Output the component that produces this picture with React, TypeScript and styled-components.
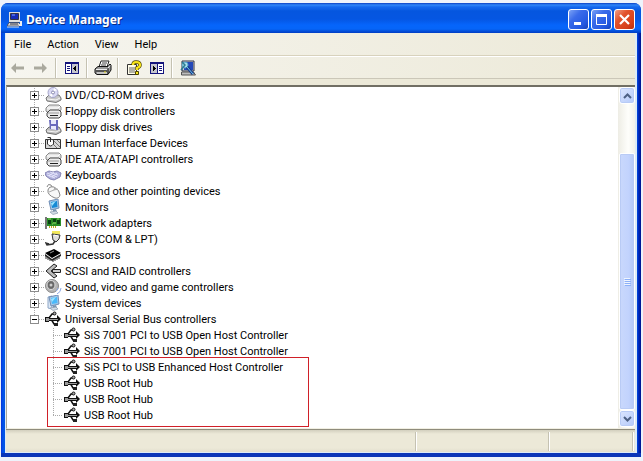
import React from "react";
import styled, { createGlobalStyle, css } from "styled-components";

const GlobalStyle = createGlobalStyle`
  * { box-sizing: border-box; }
  body {
    margin: 0;
    background: #eef3fb;
    color: #000;
    font: 11px/16px Tahoma, Roboto, "Liberation Sans", sans-serif;
    overflow: hidden;
  }
  button { font: inherit; color: inherit; margin: 0; padding: 0; border: 0; background: none; }
  ul { list-style: none; margin: 0; padding: 0; }
  svg { display: block; flex: none; }
`;

const Desktop = styled.div`
  display: flex;
  height: 100vh;
  padding: 3px 2px 4px 1px;
`;

const WindowFrame = styled.main`
  flex: 1;
  min-width: 0;
  display: flex;
  flex-direction: column;
  padding: 0 4px 4px;
  border-radius: 7px 7px 0 0;
  background: linear-gradient(90deg, #0831d9 0, #0055ea 2px, #0453e4 4px, #0453e4 calc(100% - 4px), #0030c8 calc(100% - 3px), #00138c 100%);
  box-shadow: inset 0 -4px 0 #0a35b8;
`;

const TitleBar = styled.header`
  display: flex;
  align-items: center;
  height: 30px;
  margin: 0 -4px;
  padding: 3px 6px 0;
  gap: 3px;
  border-radius: 7px 7px 0 0;
  background: linear-gradient(#0a3fc4 0, #2f86f8 2px, #1468ee 4px, #0556df 8px, #0556e2 16px, #0665fb 22px, #0665f8 26px, #0450da 28px, #003dc4 30px);
  color: #fff;
`;

const Title = styled.h1`
  flex: 1;
  margin: 0;
  font: bold 12px/20px "Trebuchet MS", "Noto Sans", sans-serif;
  text-shadow: 1px 1px #0a2a86;
`;

const CaptionButtons = styled.div`
  display: flex;
  gap: 2px;
`;

const CaptionButton = styled.button<{ $close?: boolean }>`
  width: 21px;
  height: 21px;
  display: grid;
  place-items: center;
  border: 1px solid #fff;
  border-radius: 3px;
  background: ${(p) =>
    p.$close
      ? "linear-gradient(135deg, #f0a088 0, #e2532c 35%, #d6401a 75%, #b83010 100%)"
      : "linear-gradient(135deg, #7ba2f5 0, #3a6bea 35%, #245ae2 75%, #1743b8 100%)"};
`;

const Client = styled.div`
  flex: 1;
  min-height: 0;
  display: flex;
  flex-direction: column;
  border: 0 solid #dcebf8;
  border-width: 0 2px 1px 1px;
  background: #ece9d8;
`;

const MenuBar = styled.nav`
  display: flex;
  height: 23px;
  background: linear-gradient(90deg, #f6f5ef, #ece9d8);
  border-bottom: 1px solid #d8d2bd;
`;

const MenuItem = styled.button`
  padding: 2px 8px 0;
`;

const ToolBar = styled.div`
  display: flex;
  align-items: center;
  height: 23px;
  border-top: 1px solid #fff;
  border-bottom: 1px solid #cbc7b8;
  background: linear-gradient(90deg, #f6f5ef, #ece9d8);
`;

const ToolButton = styled.button`
  width: 23px;
  height: 20px;
  display: grid;
  place-items: center;
`;

const ToolSeparator = styled.span`
  width: 2px;
  height: 20px;
  margin: 0 3px;
  border-left: 1px solid #c5c2b2;
  border-right: 1px solid #fff;
`;

const Pane = styled.section`
  flex: 1;
  min-height: 0;
  display: flex;
  margin-top: 6px;
  border: 1px solid #aca899;
  border-top: 2px solid #716f64;
  border-right: 0;
  border-bottom-color: #f1efe2;
  background: #fff;
`;

const TreeScroll = styled.div`
  flex: 1;
  min-width: 0;
  overflow: hidden;
`;

const dots = "repeating-linear-gradient(0deg, #a9a9a9 0 1px, transparent 1px 2px)";
const dotsAcross = "repeating-linear-gradient(90deg, #a9a9a9 0 1px, transparent 1px 2px)";

const Row = styled.div<{ $child?: boolean; $last?: boolean }>`
  display: flex;
  align-items: center;
  height: 16px;
  padding-left: ${(p) => (p.$child ? "57px" : "23px")};
  white-space: nowrap;
  ${(p) =>
    p.$child &&
    css`
      background:
        ${dots} 46px 0 / 1px ${p.$last ? "8px" : "16px"} no-repeat,
        ${dotsAcross} 46px 8px / 10px 1px no-repeat;
    `}
  ${(p) =>
    !p.$child &&
    css`
      background:
        ${dots} 27px 0 / 1px ${p.$last ? "8px" : "16px"} no-repeat,
        ${dotsAcross} 32px 8px / 6px 1px no-repeat;
    `}
`;

const Expander = styled.button`
  width: 9px;
  height: 9px;
  flex: none;
  margin-right: 6px;
  border: 1px solid #8c8c8c;
  background: #fff;
`;

const RowLabel = styled.span`
  margin-left: 3px;
  padding-top: 2px;
`;

const HighlightGroup = styled.li`
  position: relative;
  &::after {
    content: "";
    position: absolute;
    left: 40px;
    top: -2px;
    bottom: -4px;
    width: 260px;
    border: 1px solid #d02028;
    pointer-events: none;
  }
`;

const ScrollBar = styled.div`
  width: 17px;
  display: flex;
  flex-direction: column;
  padding: 0 0 1px 1px;
  background: linear-gradient(90deg, #eeede5, #fefefb 60%, #f3f2ea);
`;

const ScrollButton = styled.button`
  height: 17px;
  display: grid;
  place-items: center;
  border: 1px solid #fff;
  border-radius: 3px;
  background: linear-gradient(135deg, #dbe6ff, #b5cafa);
  box-shadow: inset 0 0 0 1px #b8cbf6;
`;

const Track = styled.div`
  flex: 1;
  display: flex;
  flex-direction: column;
`;

const Thumb = styled.div`
  flex: 1;
  margin-top: 49px;
  display: grid;
  place-items: center;
  border: 1px solid #fff;
  border-radius: 2px;
  background: linear-gradient(90deg, #c9d8fc, #c2d3fd 60%, #b5c8f6);
  box-shadow: inset 0 0 0 1px #b9cbf5;
`;

const StatusBar = styled.footer`
  display: grid;
  grid-template-columns: 1fr 133px 84px;
  height: 23px;
  padding: 2px 1px 1px 0;
  border-top: 1px solid #8f8c7c;
  background: linear-gradient(#d2cfbe 0, #ece9d8 4px, #ece9d8 18px, #e2dfcd 22px);
`;

const StatusCell = styled.div`
  border-right: 1px solid #fff;
  box-shadow: inset -1px 0 #c5c2b2;
`;

type IconName =
  | "cd" | "drive" | "floppy" | "hid" | "keyboard" | "mouse" | "monitor" | "network"
  | "port" | "cpu" | "scsi" | "sound" | "system" | "usb";

const Drive = () => (
  <g strokeLinejoin="round">
    <path d="M1 5 4 2h10l2 2v3l-2 2H2L1 8Z" fill="#e2e2e2" stroke="#888" />
    <path d="M2 5h11l2-2" fill="none" stroke="#fff" />
    <path d="m2 10 3-3h9l2 2v4l-2 2H4l-2-2Z" fill="#ececec" stroke="#444" />
    <path d="M3 10h11" stroke="#999" />
    <path d="M5 12h8v1H5Z" fill="#222" />
  </g>
);

const Screen = ({ tower }: { tower?: boolean }) => (
  <g>
    {tower && <path d="M3 2 7 1v13l-4-1Z" fill="#dce8f6" stroke="#8ea6c5" />}
    <path d="m4 2 9-2 1 9-8 2Z" fill="#a8c8e8" stroke="#718fb6" />
    <path d="m6 3 6-1 .5 6L7 9Z" fill={tower ? "#49b9fa" : "#168ad5"} />
    <path d="m6 4 5-2-4 5Z" fill="#9ce4ff" />
    <path d="m8 11 3-1 1 3-4 1Z" fill="#7894b0" />
    <path d="m5 13 6-1 2 2-5 1.5Z" fill="#d3dce6" stroke="#8798ac" strokeWidth=".7" />
  </g>
);

const drawings: Record<IconName, React.ReactNode> = {
  cd: (
    <g>
      <path d="m1 11 3-3h10l2 3v2l-5 2.5L2 14Z" fill="#c6c6c6" stroke="#777" />
      <path d="m2 12 9 1 4-2" fill="none" stroke="#f6f6f6" />
      <ellipse cx="8" cy="5.5" rx="5" ry="5" fill="#dadaf5" stroke="#a6a6c9" />
      <path d="m8 5 1-4 3 2ZM8 6 4 8l3 2Z" fill="#fff" />
      <circle cx="8" cy="5.5" r="1.5" fill="#fff" stroke="#8888ae" />
    </g>
  ),
  drive: <Drive />,
  floppy: (
    <g>
      <path d="m1 11 3-3h10l2 3v2l-5 2.5L2 14Z" fill="#bcbcbc" stroke="#707070" />
      <path d="m2 12 9 1 4-2" fill="none" stroke="#f5f5f5" />
      <path d="M4 1h9v10l-8-1Z" fill="#6868bc" />
      <path d="M6 1h5v4H6ZM6 7h5v4l-5-1Z" fill="#e8e8fb" />
    </g>
  ),
  hid: (
    <g stroke="#333">
      <path d="M.5 4.5h15v9H.5Z" fill="#d7d7d7" />
      <path d="m9 6 6 6M12 5l3 3M8 9l4 4" stroke="#777" />
      <path d="M2.5 5v4q3 4 6 0V5q-3-2-6 0Z" fill="#fff" />
      <path d="M5.5 4v3M5.5 4V2.5h-3" fill="none" />
    </g>
  ),
  keyboard: (
    <g>
      <path d="m0 6 4-2 4 1 4-1 4 2-1 4-6 3-4-1-4-3Z" fill="#b0b0dc" stroke="#8585b4" />
      <path d="m2 6 10 4M5 5l8 3M2 8l8 3M4 9l5-4M7 10l5-4" stroke="#eeeeff" strokeWidth=".8" />
    </g>
  ),
  mouse: (
    <g stroke="#858585">
      <path d="M2 4q1-4 4-2l1 2" fill="none" />
      <path d="M3 7q1-4 6-3 6 3 6 8-1 4-5 3Q2 12 3 7Z" fill="#f8f8f8" />
      <path d="m4 9 5-2 1-3M9 7l4-1" fill="none" stroke="#aaa" />
    </g>
  ),
  monitor: <Screen />,
  network: (
    <g>
      <path d="M1 3h15v8H1Z" fill="#278c27" />
      <path d="M0 2h2v12H0Z" fill="#777" />
      <path d="M3 5h3v4H3ZM8 4h3v3H8ZM12 5h3v4h-3Z" fill="#0a4312" />
      <path d="M3 4h3M8 8h3M12 4h2M7 9h1" stroke="#8edb62" />
      <path d="M4 12h8" stroke="#bcac24" strokeWidth="2" strokeDasharray="1 1" />
    </g>
  ),
  port: (
    <g>
      <path d="M7 0h8v3H7Z" fill="#f1e75c" />
      <path d="m7 3 8 1-1 4-3 3-3-2Z" fill="#ddd" stroke="#333" />
      <path d="m9 4 4 1" stroke="#fff" />
      <path d="m10 10-2 3-6 1-1-2 3 1" fill="none" stroke="#333" strokeWidth="1.5" />
    </g>
  ),
  cpu: (
    <g>
      <path d="m0 6 9-4 7 4-9 5Z" />
      <path d="m0 7 7 5 9-5v2l-9 5-7-5Z" fill="#222" />
      <path d="M1 9v3M3 10v3M5 11v3M8 12v3M10 11v3M12 10v3M14 9v3" stroke="#333" />
      <path d="m5 6 4-2" stroke="#999" />
    </g>
  ),
  scsi: (
    <g strokeLinejoin="round">
      <path d="M9 1 1 8l8 7 3-2-6-5 6-5Z" fill="#bbb" stroke="#222" />
      <path d="M7.5 6.5h8v3h-8Z" fill="#ccc" stroke="#222" />
    </g>
  ),
  sound: (
    <g>
      <ellipse cx="7" cy="7" rx="6.5" ry="6.5" fill="#b5b5b5" stroke="#888" />
      <ellipse cx="6" cy="6" rx="4" ry="4.5" fill="#696969" stroke="#ddd" />
      <circle cx="6" cy="6" r="1.5" fill="#ccc" />
      <path d="M11 12q2-1 2-3M12 15q4-2 4-6" fill="none" stroke="#8faae4" />
    </g>
  ),
  system: <Screen tower />,
  usb: (
    <g fill="none" stroke="#111">
      <path d="m4 7 3-4h2M6 8l3 5h1" strokeWidth="1.5" />
      <path d="M0 6h4v1h8V4l4 4-4 4v-2H4v1H0Z" fill="#111" stroke="none" />
      <path d="M1 7h3v3H1ZM4 8h9v1H4Z" fill="#999" stroke="none" />
      <circle cx="9.5" cy="2.5" r="1.5" fill="#aaa" />
      <path d="M9 12h4v3H9Z" fill="#222" stroke="none" />
    </g>
  ),
};

const Icon = ({ name }: { name: IconName }) => (
  <svg width="17" height="16" viewBox="0 0 17 16" aria-hidden="true">{drawings[name]}</svg>
);

const ComputerIcon = () => (
  <svg width="16" height="16" viewBox="0 0 16 16" aria-hidden="true">
    <path d="M2 0h11v10H2Z" fill="#dedede" />
    <path d="M3.5 1.5h8v6h-8Z" fill="#142bb7" stroke="#334" />
    <path d="M5 3h3" stroke="#7fa4ff" />
    <path d="M2 10.5h10l2 3.500H0Z" fill="#d4d4d4" stroke="#223" strokeWidth=".6" />
    <path d="M3 12h8" stroke="#334" />
    <path d="M0 15h12" stroke="#ddd" />
    <path d="M14 9v4h-2" fill="none" stroke="#eee" strokeWidth="2" />
  </svg>
);

const Arrow = ({ back }: { back?: boolean }) => (
  <svg width="13" height="12" viewBox="0 0 13 12" aria-hidden="true">
    <path d={back ? "M0 6 5 1v3.5h8v3H5V11Z" : "M13 6 8 1v3.5H0v3h8V11Z"} fill="#aaa99e" />
  </svg>
);

const PanelIcon = ({ right }: { right?: boolean }) => (
  <svg width="14" height="12" viewBox="0 0 14 12" shapeRendering="crispEdges" aria-hidden="true">
    <path d="M0 0h14v12H0Z" fill="#14147c" />
    <path d="M1 2h12v9H1Z" fill="#fff" />
    <path d={right ? "M1 2h6v9H1Z" : "M7 2h6v9H7Z"} fill="#c5c5ce" />
    <path d={right ? "M7 2h1v9H7Z" : "M6 2h1v9H6Z"} fill="#14147c" />
    <path
      d={right ? "M9 4h3v1H9ZM9 6h3v1H9ZM9 8h3v1H9Z" : "M2 4h3v1H2ZM2 6h3v1H2ZM2 8h3v1H2Z"}
      fill="#14147c"
    />
    <path d={right ? "M3 4h1v1h1v1h1v1H5v1H4v1H3Z" : "M11 4h-1v1H9v1H8v1h1v1h1v1h1Z"} fill="#000" />
  </svg>
);

const PrinterIcon = () => (
  <svg width="18" height="16" viewBox="0 0 18 16" aria-hidden="true">
    <path d="m5 7 2-6h8l-2 6Z" fill="#fff" stroke="#222" />
    <path d="M8 3h5M7 5h5" stroke="#444" />
    <path d="m1 9 3-2.500h10l2-2.500 1 1v5l-3 4.500H3L1 13Z" fill="#999" stroke="#111" />
    <path d="M2 9.5h11l3-4M3 13h10" fill="none" stroke="#eee" />
    <path d="M2 11h11M14 8v6" stroke="#111" />
    <path d="M10 12h2" stroke="#efe328" />
  </svg>
);

const HelpIcon = () => (
  <svg width="16" height="16" viewBox="0 0 16 16" aria-hidden="true">
    <path d="M1.5 4.5h9v10h-9Z" fill="#fffde9" stroke="#333" />
    <path d="M3 8h6M3 10h6M3 12h6" stroke="#666" />
    <path d="M7 5q0-3 3-3 4 0 4 3 0 2-3 3v2" fill="none" stroke="#4b4300" strokeWidth="3.5" />
    <path d="M7 5q0-3 3-3 4 0 4 3 0 2-3 3v2" fill="none" stroke="#f8e51a" strokeWidth="2.2" />
    <path d="M9.5 11.5h3v3h-3Z" fill="#f8e51a" stroke="#4b4300" />
  </svg>
);

const ScanIcon = () => (
  <svg width="16" height="16" viewBox="0 0 16 16" aria-hidden="true">
    <path d="M2 1h12v10H2Z" fill="#c8cdd8" stroke="#334" />
    <path d="M4 2h9v8H4Z" fill="#2448b8" />
    <path d="M1.5 12h12l2 3h-14Z" fill="#bbb" stroke="#555" />
    <circle cx="5" cy="5" r="3" fill="#a5dcec" stroke="#54a8c8" />
    <path d="m7 7 6 7" stroke="#173b8c" strokeWidth="3" />
    <path d="m7 7 6 7" stroke="#70c8e8" />
    <path d="m2 2 3 3-4 5" fill="none" stroke="#307d91" strokeWidth="1.5" />
  </svg>
);

const Chevron = ({ down }: { down?: boolean }) => (
  <svg width="9" height="6" viewBox="0 0 9 6" aria-hidden="true">
    <path d={down ? "m1 1 3.5 3.5L8 1" : "m1 5 3.5-3.5L8 5"} fill="none" stroke="#4d6185" strokeWidth="2" />
  </svg>
);

const categories: { label: string; icon: IconName }[] = [
  { label: "DVD/CD-ROM drives", icon: "cd" },
  { label: "Floppy disk controllers", icon: "drive" },
  { label: "Floppy disk drives", icon: "floppy" },
  { label: "Human Interface Devices", icon: "hid" },
  { label: "IDE ATA/ATAPI controllers", icon: "drive" },
  { label: "Keyboards", icon: "keyboard" },
  { label: "Mice and other pointing devices", icon: "mouse" },
  { label: "Monitors", icon: "monitor" },
  { label: "Network adapters", icon: "network" },
  { label: "Ports (COM & LPT)", icon: "port" },
  { label: "Processors", icon: "cpu" },
  { label: "SCSI and RAID controllers", icon: "scsi" },
  { label: "Sound, video and game controllers", icon: "sound" },
  { label: "System devices", icon: "system" },
];

const controllers = ["SiS 7001 PCI to USB Open Host Controller", "SiS 7001 PCI to USB Open Host Controller"];
const highlighted = ["SiS PCI to USB Enhanced Host Controller", "USB Root Hub", "USB Root Hub", "USB Root Hub"];

const Category = ({ label, icon, open }: { label: string; icon: IconName; open?: boolean }) => (
  <Row $last={open}>
    <Expander aria-label={`${open ? "Collapse" : "Expand"} ${label}`} aria-expanded={!!open}>
      <svg width="7" height="7" viewBox="0 0 7 7" shapeRendering="crispEdges" aria-hidden="true">
        <path d={open ? "M1 3h5v1H1Z" : "M1 3h5v1H1ZM3 1h1v5H3Z"} />
      </svg>
    </Expander>
    <Icon name={icon} />
    <RowLabel>{label}</RowLabel>
  </Row>
);

const Device = ({ label, last }: { label: string; last?: boolean }) => (
  <Row $child $last={last}>
    <Icon name="usb" />
    <RowLabel>{label}</RowLabel>
  </Row>
);

export default function App() {
  return (
    <Desktop>
      <GlobalStyle />
      <WindowFrame>
        <TitleBar>
          <ComputerIcon />
          <Title>Device Manager</Title>
          <CaptionButtons>
            <CaptionButton aria-label="Minimize">
              <svg width="13" height="13" aria-hidden="true"><path d="M2 9h7v3H2Z" fill="#fff" /></svg>
            </CaptionButton>
            <CaptionButton aria-label="Maximize">
              <svg width="13" height="13" aria-hidden="true">
                <path d="M1.5 2v9.5h10V2" fill="none" stroke="#fff" />
                <path d="M1 1h11v3H1Z" fill="#fff" />
              </svg>
            </CaptionButton>
            <CaptionButton $close aria-label="Close">
              <svg width="13" height="13" aria-hidden="true">
                <path d="m2 2 9 9M11 2l-9 9" stroke="#fff" strokeWidth="2.2" />
              </svg>
            </CaptionButton>
          </CaptionButtons>
        </TitleBar>
        <Client>
          <MenuBar>
            {["File", "Action", "View", "Help"].map((item) => <MenuItem key={item}>{item}</MenuItem>)}
          </MenuBar>
          <ToolBar>
            <ToolButton aria-label="Back" disabled><Arrow back /></ToolButton>
            <ToolButton aria-label="Forward" disabled><Arrow /></ToolButton>
            <ToolSeparator />
            <ToolButton aria-label="Show console tree"><PanelIcon /></ToolButton>
            <ToolSeparator />
            <ToolButton aria-label="Print"><PrinterIcon /></ToolButton>
            <ToolSeparator />
            <ToolButton aria-label="Help"><HelpIcon /></ToolButton>
            <ToolButton aria-label="Show action pane"><PanelIcon right /></ToolButton>
            <ToolSeparator />
            <ToolButton aria-label="Scan for hardware changes"><ScanIcon /></ToolButton>
          </ToolBar>
          <Pane>
            <TreeScroll>
              <ul>
                {categories.map((c) => <li key={c.label}><Category {...c} /></li>)}
                <li>
                  <Category label="Universal Serial Bus controllers" icon="usb" open />
                  <ul>
                    {controllers.map((label, i) => <li key={i}><Device label={label} /></li>)}
                    <HighlightGroup>
                      <ul>
                        {highlighted.map((label, i) => (
                          <li key={i}><Device label={label} last={i === highlighted.length - 1} /></li>
                        ))}
                      </ul>
                    </HighlightGroup>
                  </ul>
                </li>
              </ul>
            </TreeScroll>
            <ScrollBar>
              <ScrollButton aria-label="Scroll up"><Chevron /></ScrollButton>
              <Track>
                <Thumb>
                  <svg width="7" height="8" shapeRendering="crispEdges" aria-hidden="true">
                    <path d="M0 0h6v1H0ZM0 2h6v1H0ZM0 4h6v1H0ZM0 6h6v1H0Z" fill="#eef4fe" />
                    <path d="M1 1h6v1H1ZM1 3h6v1H1ZM1 5h6v1H1ZM1 7h6v1H1Z" fill="#8cb0f8" />
                  </svg>
                </Thumb>
              </Track>
              <ScrollButton aria-label="Scroll down"><Chevron down /></ScrollButton>
            </ScrollBar>
          </Pane>
          <StatusBar>
            <StatusCell />
            <StatusCell />
            <StatusCell />
          </StatusBar>
        </Client>
      </WindowFrame>
    </Desktop>
  );
}
